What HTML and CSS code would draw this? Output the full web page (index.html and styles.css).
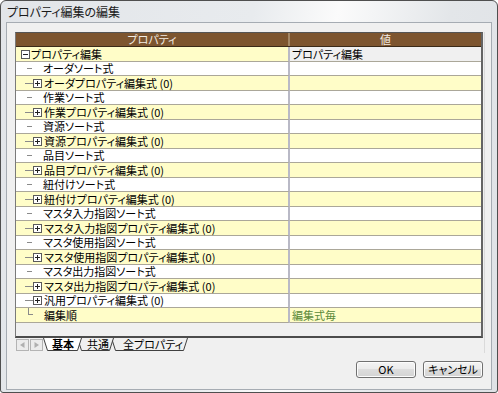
FILE: index.html
```html
<!DOCTYPE html>
<html lang="ja">
<head>
  <meta charset="UTF-8">
  <title>プロパティ編集の編集</title>
  <link rel="stylesheet" href="styles.css">
</head>
<body>
  <div class="window">
    <div class="titlebar">プロパティ編集の編集</div>
    <div class="client">
      <div class="panel">
        <div class="grid">
          <div class="head">
            <div class="hcell name">プロパティ</div>
            <div class="hcell">値</div>
          </div>
          <div class="rows">
            <div class="row">
              <div class="cell name root"><span class="box minus"></span><span class="label">プロパティ編集</span></div>
              <div class="cell value readonly"><span class="label">プロパティ編集</span></div>
            </div>
            <div class="row">
              <div class="cell name leaf"><span class="twig"></span><span class="label">オーダソート式</span></div>
              <div class="cell value"></div>
            </div>
            <div class="row">
              <div class="cell name node"><span class="twig"></span><span class="box plus"></span><span class="label">オーダプロパティ編集式 (0)</span></div>
              <div class="cell value"></div>
            </div>
            <div class="row">
              <div class="cell name leaf"><span class="twig"></span><span class="label">作業ソート式</span></div>
              <div class="cell value"></div>
            </div>
            <div class="row">
              <div class="cell name node"><span class="twig"></span><span class="box plus"></span><span class="label">作業プロパティ編集式 (0)</span></div>
              <div class="cell value"></div>
            </div>
            <div class="row">
              <div class="cell name leaf"><span class="twig"></span><span class="label">資源ソート式</span></div>
              <div class="cell value"></div>
            </div>
            <div class="row">
              <div class="cell name node"><span class="twig"></span><span class="box plus"></span><span class="label">資源プロパティ編集式 (0)</span></div>
              <div class="cell value"></div>
            </div>
            <div class="row">
              <div class="cell name leaf"><span class="twig"></span><span class="label">品目ソート式</span></div>
              <div class="cell value"></div>
            </div>
            <div class="row">
              <div class="cell name node"><span class="twig"></span><span class="box plus"></span><span class="label">品目プロパティ編集式 (0)</span></div>
              <div class="cell value"></div>
            </div>
            <div class="row">
              <div class="cell name leaf"><span class="twig"></span><span class="label">紐付けソート式</span></div>
              <div class="cell value"></div>
            </div>
            <div class="row">
              <div class="cell name node"><span class="twig"></span><span class="box plus"></span><span class="label">紐付けプロパティ編集式 (0)</span></div>
              <div class="cell value"></div>
            </div>
            <div class="row">
              <div class="cell name leaf"><span class="twig"></span><span class="label">マスタ入力指図ソート式</span></div>
              <div class="cell value"></div>
            </div>
            <div class="row">
              <div class="cell name node"><span class="twig"></span><span class="box plus"></span><span class="label">マスタ入力指図プロパティ編集式 (0)</span></div>
              <div class="cell value"></div>
            </div>
            <div class="row">
              <div class="cell name leaf"><span class="twig"></span><span class="label">マスタ使用指図ソート式</span></div>
              <div class="cell value"></div>
            </div>
            <div class="row">
              <div class="cell name node"><span class="twig"></span><span class="box plus"></span><span class="label">マスタ使用指図プロパティ編集式 (0)</span></div>
              <div class="cell value"></div>
            </div>
            <div class="row">
              <div class="cell name leaf"><span class="twig"></span><span class="label">マスタ出力指図ソート式</span></div>
              <div class="cell value"></div>
            </div>
            <div class="row">
              <div class="cell name node"><span class="twig"></span><span class="box plus"></span><span class="label">マスタ出力指図プロパティ編集式 (0)</span></div>
              <div class="cell value"></div>
            </div>
            <div class="row">
              <div class="cell name node"><span class="twig"></span><span class="box plus"></span><span class="label">汎用プロパティ編集式 (0)</span></div>
              <div class="cell value"></div>
            </div>
            <div class="row">
              <div class="cell name leaf last"><span class="twig"></span><span class="label">編集順</span></div>
              <div class="cell value green"><span class="label">編集式毎</span></div>
            </div>
          </div>
        </div>
        <div class="tabs">
          <span class="tab on">基本</span>
          <span class="tab common">共通</span>
          <span class="tab">全プロパティ</span>
        </div>
      </div>
      <div class="buttons">
        <button class="btn">OK</button>
        <button class="btn">キャンセル</button>
      </div>
    </div>
  </div>
</body>
</html>
```

FILE: styles.css
```css
body {
  margin: 0;
  font-family: "Noto Sans CJK JP", "Noto Sans", sans-serif;
  font-size: 11px;
  color: #000;
  background: #fff;
}
.window {
  width: 498px;
  height: 393px;
  box-sizing: border-box;
  border: 1px solid #4f4f4f;
  border-radius: 6px 6px 3px 3px;
  background: linear-gradient(100deg, #e2e5e9 0%, #e8ebee 45%, #fbfbfb 60%, #f4f5f6 66%, #e3e6e9 80%, #dfe2e6 100%);
  display: flex;
  flex-direction: column;
  overflow: hidden;
}
.titlebar {
  height: 21px;
  line-height: 22px;
  padding-left: 6px;
  font-size: 12px;
  font-feature-settings: "palt";
  color: #1a1a1a;
}
.client {
  flex: 1;
  margin: 0 5px 2px 5px;
  border: 1px solid #a6acb3;
  background: #f0f0f0;
  padding: 9px 6px 0 8px;
}
.panel {
  border-right: 1px solid #dadada;
  padding-right: 1px;
}
.grid {
  height: 306px;
  box-sizing: border-box;
  border-left: 1px solid #7a7a7a;
  border-top: 1px solid #555;
  border-right: 2px solid #646464;
  border-bottom: 2px solid #4c4c4c;
  background: #f0f0f0;
}
.head {
  display: flex;
  height: 14px;
  box-sizing: border-box;
  border-bottom: 1px solid #3b2a18;
  background: #7d552f;
  color: #f2ece4;
  line-height: 13px;
  font-feature-settings: "palt";
}
.hcell {
  flex: 1;
  text-align: center;
}
.hcell.name {
  flex: none;
  width: 272px;
  border-right: 2px solid #a48766;
}
.row {
  display: flex;
  height: 15px;
  background: #fffdc8;
  font-feature-settings: "palt";
}
.row:nth-child(even) {
  height: 14px;
  background: #fff;
}
.cell {
  box-sizing: border-box;
  border-bottom: 1px solid #aba799;
  white-space: nowrap;
}
.label {
  display: block;
  height: 13px;
  line-height: 13px;
}
.cell.name {
  width: 274px;
  border-right: 2px solid #b9b9c6;
  display: flex;
  align-items: center;
}
.cell.value {
  flex: 1;
  padding-left: 2px;
  display: flex;
  align-items: center;
}
.cell.readonly {
  background: #f0f0f0;
}
.green {
  color: #5b8a3a;
}
.root {
  padding-left: 5px;
}
.root .box {
  margin-right: 1px;
}
.leaf {
  padding-left: 11px;
}
.leaf .twig {
  width: 5px;
  margin-right: 11px;
}
.node {
  padding-left: 9px;
}
.node .twig {
  width: 8px;
}
.node .box {
  margin-right: 2px;
}
.twig {
  height: 0;
  border-top: 1px solid #8a8a8a;
}
.leaf.last .twig {
  align-self: flex-start;
  height: 6px;
  width: 4px;
  margin-left: 1px;
  border-top: 0;
  border-left: 1px solid #8a8a8a;
  border-bottom: 1px solid #8a8a8a;
}
.box {
  position: relative;
  flex: none;
  width: 9px;
  height: 9px;
  box-sizing: border-box;
  border: 1px solid #5a5a5a;
  background: #fff;
}
.box::before {
  content: "";
  position: absolute;
  left: 1px;
  top: 3px;
  width: 5px;
  height: 1px;
  background: #222;
}
.box.plus::after {
  content: "";
  position: absolute;
  left: 3px;
  top: 1px;
  width: 1px;
  height: 5px;
  background: #222;
}
/* sheet tabs: shapes drawn as a vector background, labels are text */
.tabs {
  display: flex;
  height: 15px;
  padding-left: 37px;
  background-color: #f0f0f0;
  background-repeat: no-repeat;
  background-image: url("data:image/svg+xml,%3Csvg xmlns='http://www.w3.org/2000/svg' width='200' height='15'%3E%3Crect x='1.5' y='1.5' width='12' height='11' fill='%23ececec' stroke='%23b4b4b4'/%3E%3Cpath d='M9.5 4 L5 7 L9.5 10 Z' fill='%23b0b0b0'/%3E%3Crect x='15.5' y='1.5' width='12' height='11' fill='%23ececec' stroke='%23b4b4b4'/%3E%3Cpath d='M19.5 4 L24 7 L19.5 10 Z' fill='%23b0b0b0'/%3E%3Cpath d='M96.5 0 L100.5 12.5 L168.5 12.5 L172.5 0' fill='%23f0f0f0' stroke='%23404040'/%3E%3Cpath d='M62.5 0 L66.5 12.5 L94.5 12.5 L98.5 0' fill='%23f0f0f0' stroke='%23404040'/%3E%3Cpath d='M28.5 0 L32.5 12.5 L62.5 12.5 L66.5 0' fill='white' stroke='%23404040'/%3E%3C/svg%3E");
}
.tab {
  height: 13px;
  line-height: 12px;
  font-feature-settings: "palt";
}
.tab.on {
  width: 35px;
  font-weight: bold;
}
.tab.common {
  width: 36px;
}
.buttons {
  display: flex;
  justify-content: flex-end;
  gap: 7px;
  margin-top: 8px;
  padding-right: 2px;
}
.btn {
  width: 60px;
  height: 17px;
  padding: 0;
  border: 1px solid #707070;
  border-radius: 3px;
  background: linear-gradient(#f4f4f4, #ebebeb 45%, #dddddd 50%, #d3d3d3);
  box-shadow: inset 0 0 0 1px #fcfcfc;
  font-family: "Noto Sans CJK JP", sans-serif;
  font-size: 11px;
  font-feature-settings: "palt";
  line-height: 15px;
  color: #000;
}
```
